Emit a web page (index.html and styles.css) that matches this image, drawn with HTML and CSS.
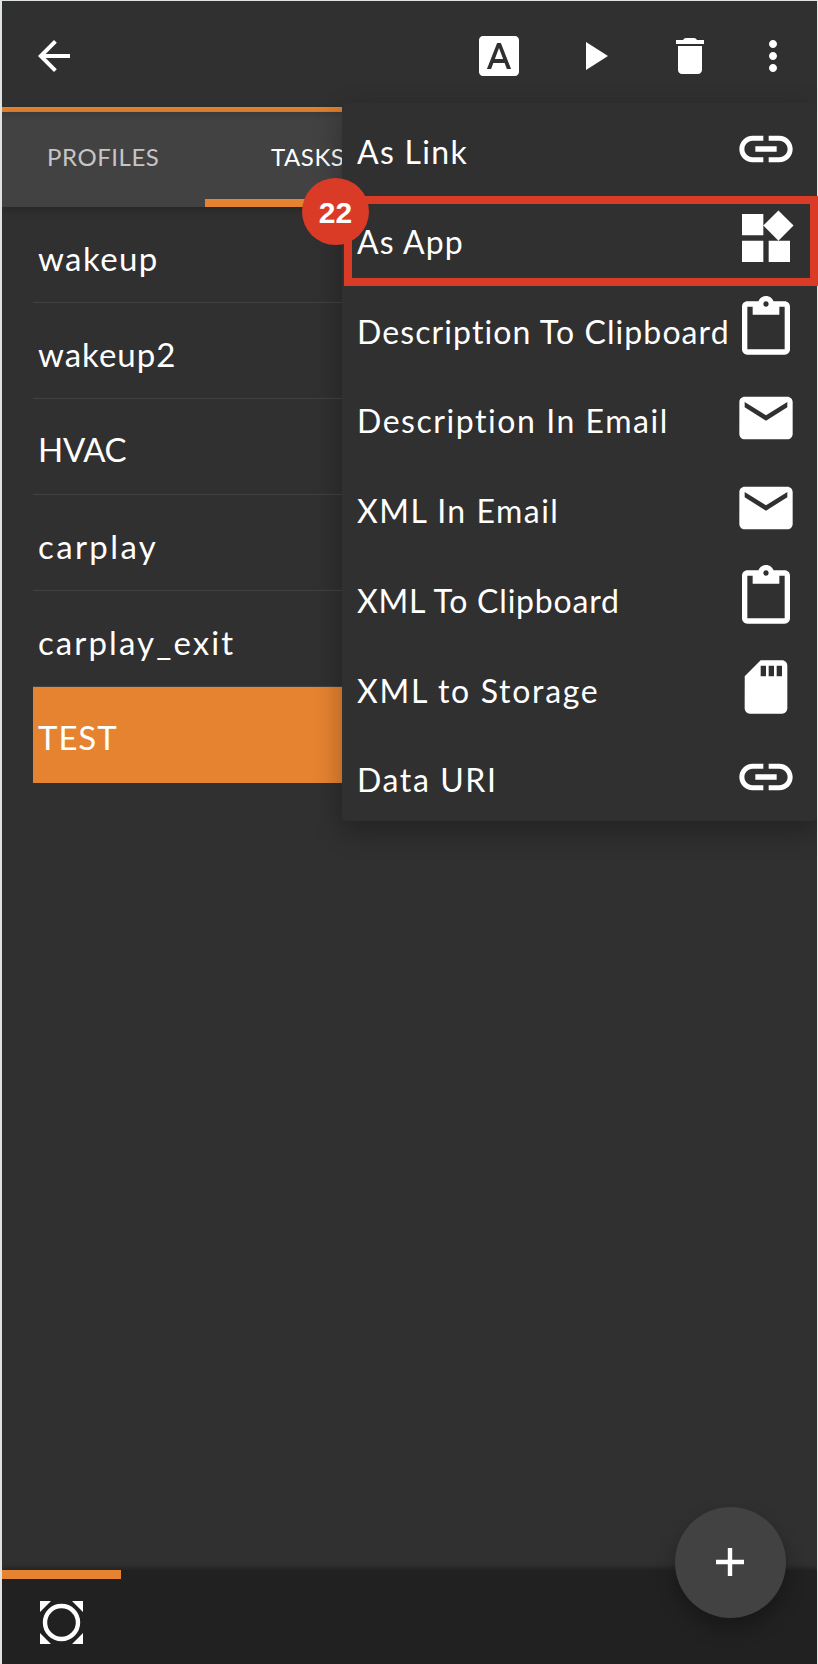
FILE: index.html
```html
<!DOCTYPE html>
<html lang="en">
<head>
<meta charset="utf-8">
<title>Tasks</title>
<link rel="stylesheet" href="styles.css">
</head>
<body>
<div class="screen">
  <header class="toolbar">
    <svg class="icon back" viewBox="0 0 24 24"><path d="M20 11H7.83l5.59-5.59L12 4l-8 8 8 8 1.41-1.41L7.83 13H20v-2z"/></svg>
    <div class="actions">
      <svg class="icon" viewBox="0 0 24 24"><path d="M9.93 13.5h4.14L12 7.98zM20 2H4c-1.1 0-2 .9-2 2v16c0 1.1.9 2 2 2h16c1.1 0 2-.9 2-2V4c0-1.1-.9-2-2-2zm-4.05 16.5l-1.14-3H9.17l-1.12 3H5.96l5.11-13h1.86l5.11 13h-2.09z"/></svg>
      <svg class="icon play" viewBox="0 0 24 24"><path d="M8 5v14l11-7z"/></svg>
      <svg class="icon trash" viewBox="0 0 24 24"><path d="M6 19c0 1.1.9 2 2 2h8c1.1 0 2-.9 2-2V7H6v12zM19 4h-3.5q-.5-1-1.5-1h-4q-1 0-1.5 1H5v2h14V4z"/></svg>
      <svg class="icon more" viewBox="0 0 24 24"><path d="M12 8c1.1 0 2-.9 2-2s-.9-2-2-2-2 .9-2 2 .9 2 2 2zm0 2c-1.1 0-2 .9-2 2s.9 2 2 2 2-.9 2-2-.9-2-2-2zm0 6c-1.1 0-2 .9-2 2s.9 2 2 2 2-.9 2-2-.9-2-2-2z"/></svg>
    </div>
  </header>
  <nav class="tabs">
    <div class="tab"><span>PROFILES</span></div>
    <div class="tab active"><span>TASKS</span></div>
  </nav>
  <main class="content">
    <ul class="tasks">
      <li class="task"><span class="t-wakeup">wakeup</span></li>
      <li class="task"><span class="t-wakeup2">wakeup2</span></li>
      <li class="task caps"><span class="t-hvac">HVAC</span></li>
      <li class="task"><span class="t-carplay">carplay</span></li>
      <li class="task"><span class="t-exit">carplay_exit</span></li>
      <li class="task caps selected"><span class="t-test">TEST</span></li>
    </ul>
  </main>
  <footer class="bottom">
    <div class="marker"></div>
    <svg class="project" viewBox="0 0 43 43"><circle cx="21.5" cy="21.5" r="16.5"/><path d="M0 0h11L0 11zM43 0v11L32 0zM0 43V32l11 11zM43 43H32l11-11z"/></svg>
  </footer>

  <button class="fab"><svg viewBox="0 0 28 28"><path d="M11.8 0h4.4v11.8H28v4.4H16.2V28h-4.4V16.2H0v-4.4h11.8z"/></svg></button>

  <div class="menu">
    <div class="item"><span class="m-link">As Link</span><svg viewBox="0 0 24 24"><path d="M3.9 12c0-1.71 1.39-3.1 3.1-3.1h4V7H7c-2.76 0-5 2.24-5 5s2.24 5 5 5h4v-1.9H7c-1.71 0-3.1-1.39-3.1-3.1zM8 13h8v-2H8v2zm9-6h-4v1.9h4c1.71 0 3.1 1.39 3.1 3.1s-1.39 3.1-3.1 3.1h-4V17h4c2.76 0 5-2.24 5-5s-2.24-5-5-5z"/></svg></div>
    <div class="item"><span class="m-app">As App</span><svg viewBox="0 0 24 24"><path d="M13 13v8h8v-8h-8zM3 21h8v-8H3v8zM3 3v8h8V3H3zm13.66-1.31L11 7.34 16.66 13l5.66-5.66-5.66-5.65z"/></svg></div>
    <div class="item"><span class="m-dclip">Description To Clipboard</span><svg viewBox="0 0 24 24"><path d="M19 2h-4.18C14.4.84 13.3 0 12 0c-1.3 0-2.4.84-2.82 2H5c-1.1 0-2 .9-2 2v16c0 1.1.9 2 2 2h14c1.1 0 2-.9 2-2V4c0-1.1-.9-2-2-2zm-7 0c.55 0 1 .45 1 1s-.45 1-1 1-1-.45-1-1 .45-1 1-1zm7 18H5V4h2v3h10V4h2v16z"/></svg></div>
    <div class="item"><span class="m-dmail">Description In Email</span><svg viewBox="0 0 24 24"><path d="M20 4H4c-1.1 0-1.99.9-1.99 2L2 18c0 1.1.9 2 2 2h16c1.1 0 2-.9 2-2V6c0-1.1-.9-2-2-2zm0 4l-8 5-8-5V6l8 5 8-5v2z"/></svg></div>
    <div class="item"><span class="m-xmail">XML In Email</span><svg viewBox="0 0 24 24"><path d="M20 4H4c-1.1 0-1.99.9-1.99 2L2 18c0 1.1.9 2 2 2h16c1.1 0 2-.9 2-2V6c0-1.1-.9-2-2-2zm0 4l-8 5-8-5V6l8 5 8-5v2z"/></svg></div>
    <div class="item"><span class="m-xclip">XML To Clipboard</span><svg viewBox="0 0 24 24"><path d="M19 2h-4.18C14.4.84 13.3 0 12 0c-1.3 0-2.4.84-2.82 2H5c-1.1 0-2 .9-2 2v16c0 1.1.9 2 2 2h14c1.1 0 2-.9 2-2V4c0-1.1-.9-2-2-2zm-7 0c.55 0 1 .45 1 1s-.45 1-1 1-1-.45-1-1 .45-1 1-1zm7 18H5V4h2v3h10V4h2v16z"/></svg></div>
    <div class="item"><span class="m-store">XML to Storage</span><svg viewBox="0 0 24 24"><path d="M18 2h-8L4.02 8 4 20c0 1.1.9 2 2 2h12c1.1 0 2-.9 2-2V4c0-1.1-.9-2-2-2zm-6 6h-2V4h2v4zm3 0h-2V4h2v4zm3 0h-2V4h2v4z"/></svg></div>
    <div class="item"><span class="m-uri">Data URI</span><svg viewBox="0 0 24 24"><path d="M3.9 12c0-1.71 1.39-3.1 3.1-3.1h4V7H7c-2.76 0-5 2.24-5 5s2.24 5 5 5h4v-1.9H7c-1.71 0-3.1-1.39-3.1-3.1zM8 13h8v-2H8v2zm9-6h-4v1.9h4c1.71 0 3.1 1.39 3.1 3.1s-1.39 3.1-3.1 3.1h-4V17h4c2.76 0 5-2.24 5-5s-2.24-5-5-5z"/></svg></div>
  </div>
</div>
<div class="highlight"></div>
<div class="badge">22</div>
</body>
</html>
```
FILE: styles.css
```css
* { box-sizing: border-box; }
body {
  margin: 0;
  padding: 1px 1px 0 2px;
  width: 818px;
  height: 1664px;
  overflow: hidden;
  position: relative;
  background: #dfe3e1;
  font-family: Lato, "Open Sans", sans-serif;
  color: #fff;
}
svg { display: block; fill: #fff; flex: none; }
span { white-space: nowrap; }
.screen {
  height: 1663px;
  display: flex;
  flex-direction: column;
  background: #303030;
  overflow: hidden;
}
.toolbar {
  flex: none;
  height: 111px;
  padding: 0 20px 0 28px;
  display: flex;
  justify-content: space-between;
  border-bottom: 5px solid #e58331;
}
.icon { width: 48px; height: 48px; margin-top: 31px; }
.actions { display: flex; }
.play { margin-left: 47px; }
.trash { margin-left: 48px; }
.more { margin-left: 35px; }
.tabs {
  flex: none;
  height: 95px;
  display: flex;
  background: linear-gradient(#3b3b3b, #424242 8px);
  box-shadow: 0 2px 8px rgba(0, 0, 0, .25);
}
.tab {
  flex: none;
  width: 203px;
  padding: 30px 0 0 45px;
  font-size: 24px;
  line-height: 30px;
  letter-spacing: .55px;
  color: #c6c6c6;
}
.tab.active {
  width: 204px;
  padding-left: 66px;
  color: #fff;
  border-bottom: 8px solid #e58331;
}
.content { flex: 1; padding: 0 31px; }
.tasks { margin: 0; padding: 0; list-style: none; }
.task {
  height: 96px;
  padding: 31px 0 0 5px;
  border-bottom: 1px solid #414141;
  font-size: 33px;
  line-height: 40px;
}
.task.caps { padding-top: 30px; }
.task.selected { background: #e58331; border-bottom: 0; }
.t-wakeup { letter-spacing: 1.4px; }
.t-wakeup2 { letter-spacing: 1px; }
.t-hvac { letter-spacing: -.3px; }
.t-carplay { letter-spacing: 2.4px; }
.t-exit { letter-spacing: 2.1px; }
.t-test { letter-spacing: .9px; }
.bottom {
  flex: none;
  height: 94px;
  background: #212121;
  box-shadow: 0 -2px 5px rgba(0, 0, 0, .35);
}
.marker { width: 119px; height: 8.5px; background: #e58331; }
.project { width: 43px; height: 43px; margin: 22px 0 0 38px; }
.project circle { fill: none; stroke: #fff; stroke-width: 4.4; }
.fab {
  position: absolute;
  left: 674.5px;
  top: 1506.5px;
  width: 111px;
  height: 111px;
  padding: 0;
  border: 0;
  border-radius: 50%;
  background: #424242;
  display: flex;
  align-items: center;
  justify-content: center;
  box-shadow: 0 10px 20px rgba(0, 0, 0, .3);
}
.fab svg { width: 28px; height: 28px; }
.menu {
  position: absolute;
  left: 342px;
  top: 103px;
  width: 475px;
  height: 718px;
  display: grid;
  grid-template-rows: repeat(8, 1fr);
  background: #303030;
  border-radius: 4px;
  box-shadow: 0 10px 28px rgba(0, 0, 0, .3);
  clip-path: inset(-60px 0 -60px -60px);
}
.item {
  display: flex;
  justify-content: space-between;
  padding: 0 19px 0 15px;
  font-size: 32px;
  line-height: 40px;
}
.item span { margin-top: 29px; }
.item svg { width: 64px; height: 64px; margin-top: 13.5px; margin-left: -16px; }
.m-link { letter-spacing: 1.3px; }
.m-app { letter-spacing: 1.1px; }
.m-dclip { letter-spacing: 1.1px; }
.m-dmail { letter-spacing: 1.55px; }
.m-xmail { letter-spacing: 1.5px; }
.m-xclip { letter-spacing: .8px; }
.m-store { letter-spacing: 1.7px; }
.m-uri { letter-spacing: 1.6px; }
.highlight {
  position: absolute;
  left: 344px;
  top: 196px;
  width: 474px;
  height: 90px;
  border: 8px solid #da3b26;
}
.badge {
  position: absolute;
  left: 302px;
  top: 177.5px;
  width: 67px;
  height: 67px;
  border-radius: 50%;
  background: #da3b26;
  font: bold 30px/70px "Liberation Sans", Arial, sans-serif;
  text-align: center;
}
```
